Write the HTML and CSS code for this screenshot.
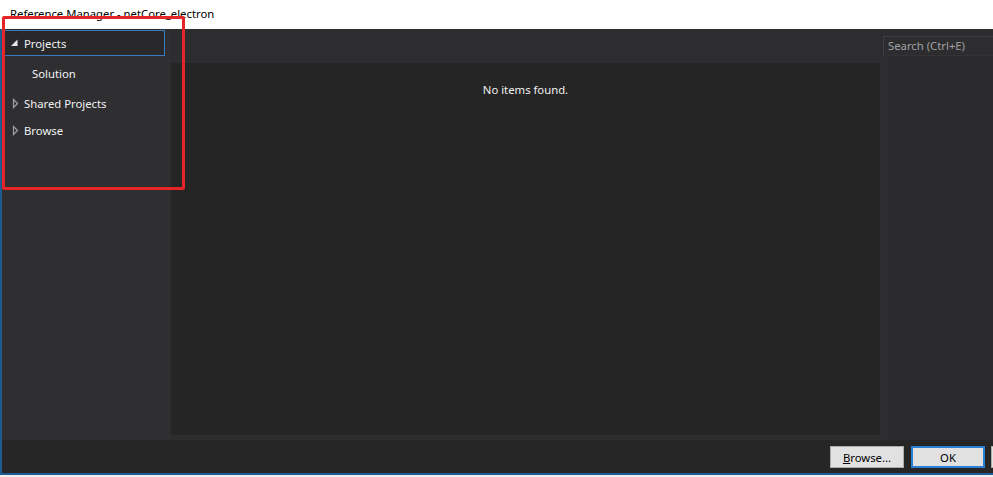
FILE: index.html
```html
<!DOCTYPE html>
<html>
<head>
<meta charset="utf-8">
<link rel="stylesheet" href="styles.css">
</head>
<body>
<div class="window">
  <div class="titlebar">Reference Manager - netCore_electron</div>
  <div class="client">
    <div class="content">
      <div class="left">
        <div class="node selected">
          <svg class="arrow" width="9" height="10" viewBox="0 0 9 10"><polygon points="7.5,1.5 7.5,8 1,8" fill="#e8e8e8"/></svg>
          <span>Projects</span>
        </div>
        <div class="node child"><span>Solution</span></div>
        <div class="node">
          <svg class="arrow" width="9" height="11" viewBox="0 0 9 11"><polygon points="3.5,1.5 7.5,5.5 3.5,9.5" fill="none" stroke="#a0a0a0" stroke-width="1.2"/></svg>
          <span>Shared Projects</span>
        </div>
        <div class="node short">
          <svg class="arrow" width="9" height="11" viewBox="0 0 9 11"><polygon points="3.5,1.5 7.5,5.5 3.5,9.5" fill="none" stroke="#a0a0a0" stroke-width="1.2"/></svg>
          <span>Browse</span>
        </div>
      </div>
      <div class="center">
        <div class="header"></div>
        <div class="list"><div class="empty">No items found.</div></div>
      </div>
      <div class="right">
        <div class="search">Search (Ctrl+E)</div>
        <div class="details"></div>
      </div>
    </div>
    <div class="footer">
      <button class="btn"><u>B</u>rowse...</button>
      <button class="btn default">OK</button>
      <button class="btn cut"></button>
    </div>
  </div>
  <div class="annotation"></div>
</div>
</body>
</html>
```
FILE: styles.css
```css
html, body {
  margin: 0;
  padding: 0;
  background: #f0f0f0;
}
.window {
  position: relative;
  width: 993px;
  height: 477px;
  display: flex;
  flex-direction: column;
  font-family: "Noto Sans", "Open Sans", sans-serif;
  font-size: 11.3px;
  overflow: hidden;
}
.titlebar {
  height: 29px;
  background: #ffffff;
  color: #000;
  padding-left: 10px;
  line-height: 27px;
  font-size: 11.3px;
  box-sizing: border-box;
}
.client {
  flex: 1;
  display: flex;
  flex-direction: column;
  background: #2d2d30;
  border-left: 2px solid #1c5a8f;
  border-bottom: 2px solid #1c5a8f;
  margin-bottom: 2px;
}
.content {
  flex: 1;
  display: flex;
}
.left {
  width: 168px;
  padding-top: 1px;
  background: #2f2f32;
  display: flex;
  flex-direction: column;
}
.node {
  display: flex;
  align-items: center;
  height: 30px;
  color: #f1f1f1;
  box-sizing: border-box;
  padding-left: 8px;
}
.node.short { height: 25px; }
.node .arrow {
  margin-right: 5px;
}
.node.selected {
  width: 163px;
  height: 26px;
  margin-bottom: 2px;
  border: 1px solid #3a78bf;
  background: #29292c;
  padding-left: 7px;
}
.node.child {
  padding-left: 30px;
}
.center {
  flex: 1;
  display: flex;
  flex-direction: column;
}
.header {
  height: 34px;
  background: #2d2d30;
}
.list {
  flex: 1;
  background: #252526;
  margin-left: 1px;
  margin-bottom: 5px;
  padding-top: 19px;
  box-sizing: border-box;
}
.empty {
  text-align: center;
  color: #f1f1f1;
}
.right {
  width: 113px;
  display: flex;
  flex-direction: column;
  padding-top: 7px;
  box-sizing: border-box;
}
.search {
  margin-left: 3px;
  height: 20px;
  line-height: 18px;
  box-sizing: border-box;
  border-top: 1px solid #3f3f46;
  border-left: 1px solid #3f3f46;
  border-bottom: 1px solid #333337;
  padding-left: 4px;
  color: #a0a0a0;
  background: #2d2d30;
}
.details {
  flex: 1;
  margin-left: 7px;
  background: #2b2b2e;
}
.footer {
  height: 33px;
  background: #262627;
  display: flex;
  align-items: center;
  justify-content: flex-end;
  gap: 7px;
  padding-top: 1px;
  box-sizing: border-box;
  margin-right: -10px;
}
.btn {
  width: 74px;
  height: 22px;
  font-family: inherit;
  font-size: 11.3px;
  color: #000;
  background: #e1e1e1;
  border: 1px solid #adadad;
  padding: 0;
  margin: 0;
}
.btn.default {
  border: 2px solid #2a7fd4;
  width: 74px;
}
.btn.cut {
  width: 12px;
  margin-left: -1px;
}
.annotation {
  position: absolute;
  left: 2px;
  top: 16px;
  width: 177px;
  height: 168px;
  border: 3px solid #e52528;
  border-radius: 2px;
}
```
